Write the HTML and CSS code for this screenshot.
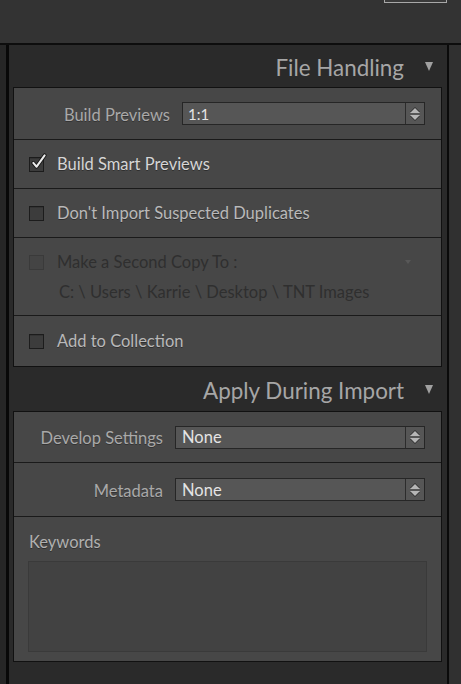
FILE: index.html
```html
<!DOCTYPE html>
<html>
<head>
<meta charset="utf-8">
<link rel="stylesheet" href="styles.css">
</head>
<body>
<div class="topbar"><div class="topbtn"></div></div>
<div class="topline"></div>
<div class="main">
  <div class="strip-left"></div>
  <div class="edge-left"></div>
  <div class="panel">
    <div class="header"><span class="header-title">File Handling</span><span class="tri"></span></div>
    <div class="box">
      <div class="row row-select row-previews">
        <span class="label">Build Previews</span>
        <div class="select"><span class="select-val">1:1</span><span class="select-arrows"><span class="arr-up"></span><span class="arr-down"></span></span></div>
      </div>
      <div class="row row-check row-smart">
        <span class="check checked"><svg class="checkmark" viewBox="0 0 18 18" width="17" height="17"><path d="M3.5 10.5 L7 14.5 L15.5 2.5" fill="none" stroke="#141414" stroke-width="4" stroke-linecap="round" stroke-linejoin="round"/><path d="M3.5 10.5 L7 14.5 L15.5 2.5" fill="none" stroke="#ebebeb" stroke-width="2.2" stroke-linecap="round" stroke-linejoin="round"/></svg></span>
        <span class="ctext bright">Build Smart Previews</span>
      </div>
      <div class="row row-check">
        <span class="check"></span>
        <span class="ctext">Don't Import Suspected Duplicates</span>
      </div>
      <div class="row row-copy">
        <div class="copy-line">
          <span class="check disabled"></span>
          <span class="ctext dim">Make a Second Copy To :</span>
          <span class="small-tri"></span>
        </div>
        <div class="copy-path dim">C: \ Users \ Karrie \ Desktop \ TNT Images</div>
      </div>
      <div class="row row-check row-collection">
        <span class="check"></span>
        <span class="ctext">Add to Collection</span>
      </div>
    </div>
    <div class="header header2"><span class="header-title">Apply During Import</span><span class="tri"></span></div>
    <div class="box box2">
      <div class="row row-select row-develop">
        <span class="label">Develop Settings</span>
        <div class="select"><span class="select-val">None</span><span class="select-arrows"><span class="arr-up"></span><span class="arr-down"></span></span></div>
      </div>
      <div class="row row-select row-meta">
        <span class="label">Metadata</span>
        <div class="select"><span class="select-val">None</span><span class="select-arrows"><span class="arr-up"></span><span class="arr-down"></span></span></div>
      </div>
      <div class="row row-keywords">
        <div class="kw-label">Keywords</div>
        <div class="kw-area"></div>
      </div>
    </div>
  </div>
  <div class="edge-right"></div>
  <div class="strip-right"></div>
</div>
</body>
</html>
```
FILE: styles.css
```css
* { box-sizing: border-box; }
html, body { margin: 0; padding: 0; }
body {
  width: 461px;
  height: 684px;
  overflow: hidden;
  background: #333333;
  font-family: "Lato", "Open Sans", sans-serif;
  color: #b8b8b8;
}
.topbar {
  height: 43px;
  background: #333333;
  display: flex;
  justify-content: flex-end;
}
.topbtn {
  width: 63px;
  height: 3px;
  margin-right: 14px;
  border: 1px solid #a8a8a8;
  border-top: none;
  background: #3a3a3a;
}
.topline { height: 2px; background: #0d0d0d; }
.main {
  display: flex;
  height: 639px;
}
.strip-left { width: 6px; background: #262626; }
.edge-left { width: 3px; background: #080808; }
.edge-right { width: 2px; background: #0a0a0a; }
.strip-right { width: 12px; background: #303030; }
.panel {
  flex: 1;
  background: #2a2a2a;
  padding: 0 5px 0 4px;
}
.header {
  height: 42px;
  display: flex;
  justify-content: flex-end;
  align-items: center;
  padding-right: 9px;
  gap: 21px;
}
.header2 { height: 44px; }
.header-title {
  font-size: 22.4px;
  color: #a6a6a6;
  line-height: 1;
  padding-top: 5px;
}
.tri {
  width: 0; height: 0;
  border-left: 4.5px solid transparent;
  border-right: 4.5px solid transparent;
  border-top: 9px solid #a0a0a0;
}
.box {
  background: #474747;
  border: 1px solid #111111;
}
.row {
  border-bottom: 1px solid #1a1a1a;
  display: flex;
  align-items: center;
}
.row:last-child { border-bottom: none; }
.row-previews { height: 52px; }
.row-check { height: 49px; padding-left: 15px; }
.row-collection { height: 50px; }
.row-copy { height: 78px; flex-direction: column; align-items: stretch; padding: 14px 0 0 15px; }
.row-develop { height: 51px; }
.row-meta { height: 54px; }
.row-keywords { height: 144px; flex-direction: column; align-items: stretch; padding: 15px 14px 0 14px; }

.label {
  font-size: 16.5px;
  color: #a9a9a9;
  text-align: right;
  flex: none;
  text-shadow: 0 1px 0 rgba(0,0,0,0.3);
  padding-top: 2px;
}
.row-previews .label { width: 156px; margin-right: 12px; }
.box2 .label { width: 149px; margin-right: 12px; }
.select {
  flex: none;
  height: 23px;
  background: #565656;
  border: 1px solid #262626;
  display: flex;
  align-items: center;
  color: #e4e4e4;
  font-size: 15px;
}
.row-previews .select { width: 243px; }
.box2 .select { width: 250px; }
.select-val { flex: 1; padding-left: 5px; }
.box2 .select-val { padding-left: 6px; font-size: 16.5px; }
.select-arrows {
  width: 19px;
  height: 100%;
  border-left: 1px solid #2c2c2c;
  display: flex;
  flex-direction: column;
  align-items: center;
  justify-content: center;
  gap: 2px;
}
.arr-up, .arr-down {
  width: 0; height: 0;
  border-left: 5px solid transparent;
  border-right: 5px solid transparent;
}
.arr-up { border-bottom: 5px solid #b6b6b6; filter: drop-shadow(0 -1px 0 #2a2a2a); }
.arr-down { border-top: 5px solid #b6b6b6; filter: drop-shadow(0 1px 0 #2a2a2a); }

.check {
  position: relative;
  flex: none;
  width: 15px;
  height: 15px;
  border: 1px solid #1c1c1c;
  background: #3c3c3c;
  box-shadow: inset 0 1px 0 #333;
}
.check.disabled { border-color: #3a3a3a; background: #444444; box-shadow: none; }
.checkmark { position: absolute; left: 0; top: -5px; }
.ctext {
  font-size: 16.5px;
  margin-left: 13px;
  color: #b9b9b9;
  text-shadow: 0 1px 0 rgba(0,0,0,0.35);
}
.ctext.bright { color: #d6d6d6; }
.dim { color: #2f2f2f; text-shadow: none; }
.copy-line { display: flex; align-items: center; padding-right: 30px; }
.small-tri {
  margin-left: auto;
  width: 0; height: 0;
  border-left: 3.5px solid transparent;
  border-right: 3.5px solid transparent;
  border-top: 4px solid #585858;
}
.copy-path { font-size: 16.5px; margin-top: 10px; padding-left: 30px; }
.kw-label {
  font-size: 16.5px;
  color: #b0b0b0;
  text-shadow: 0 1px 0 rgba(0,0,0,0.35);
  padding-left: 1px;
}
.kw-area {
  margin-top: 9px;
  height: 91px;
  background: #424242;
  border: 1px solid #3a3a3a;
}
```
